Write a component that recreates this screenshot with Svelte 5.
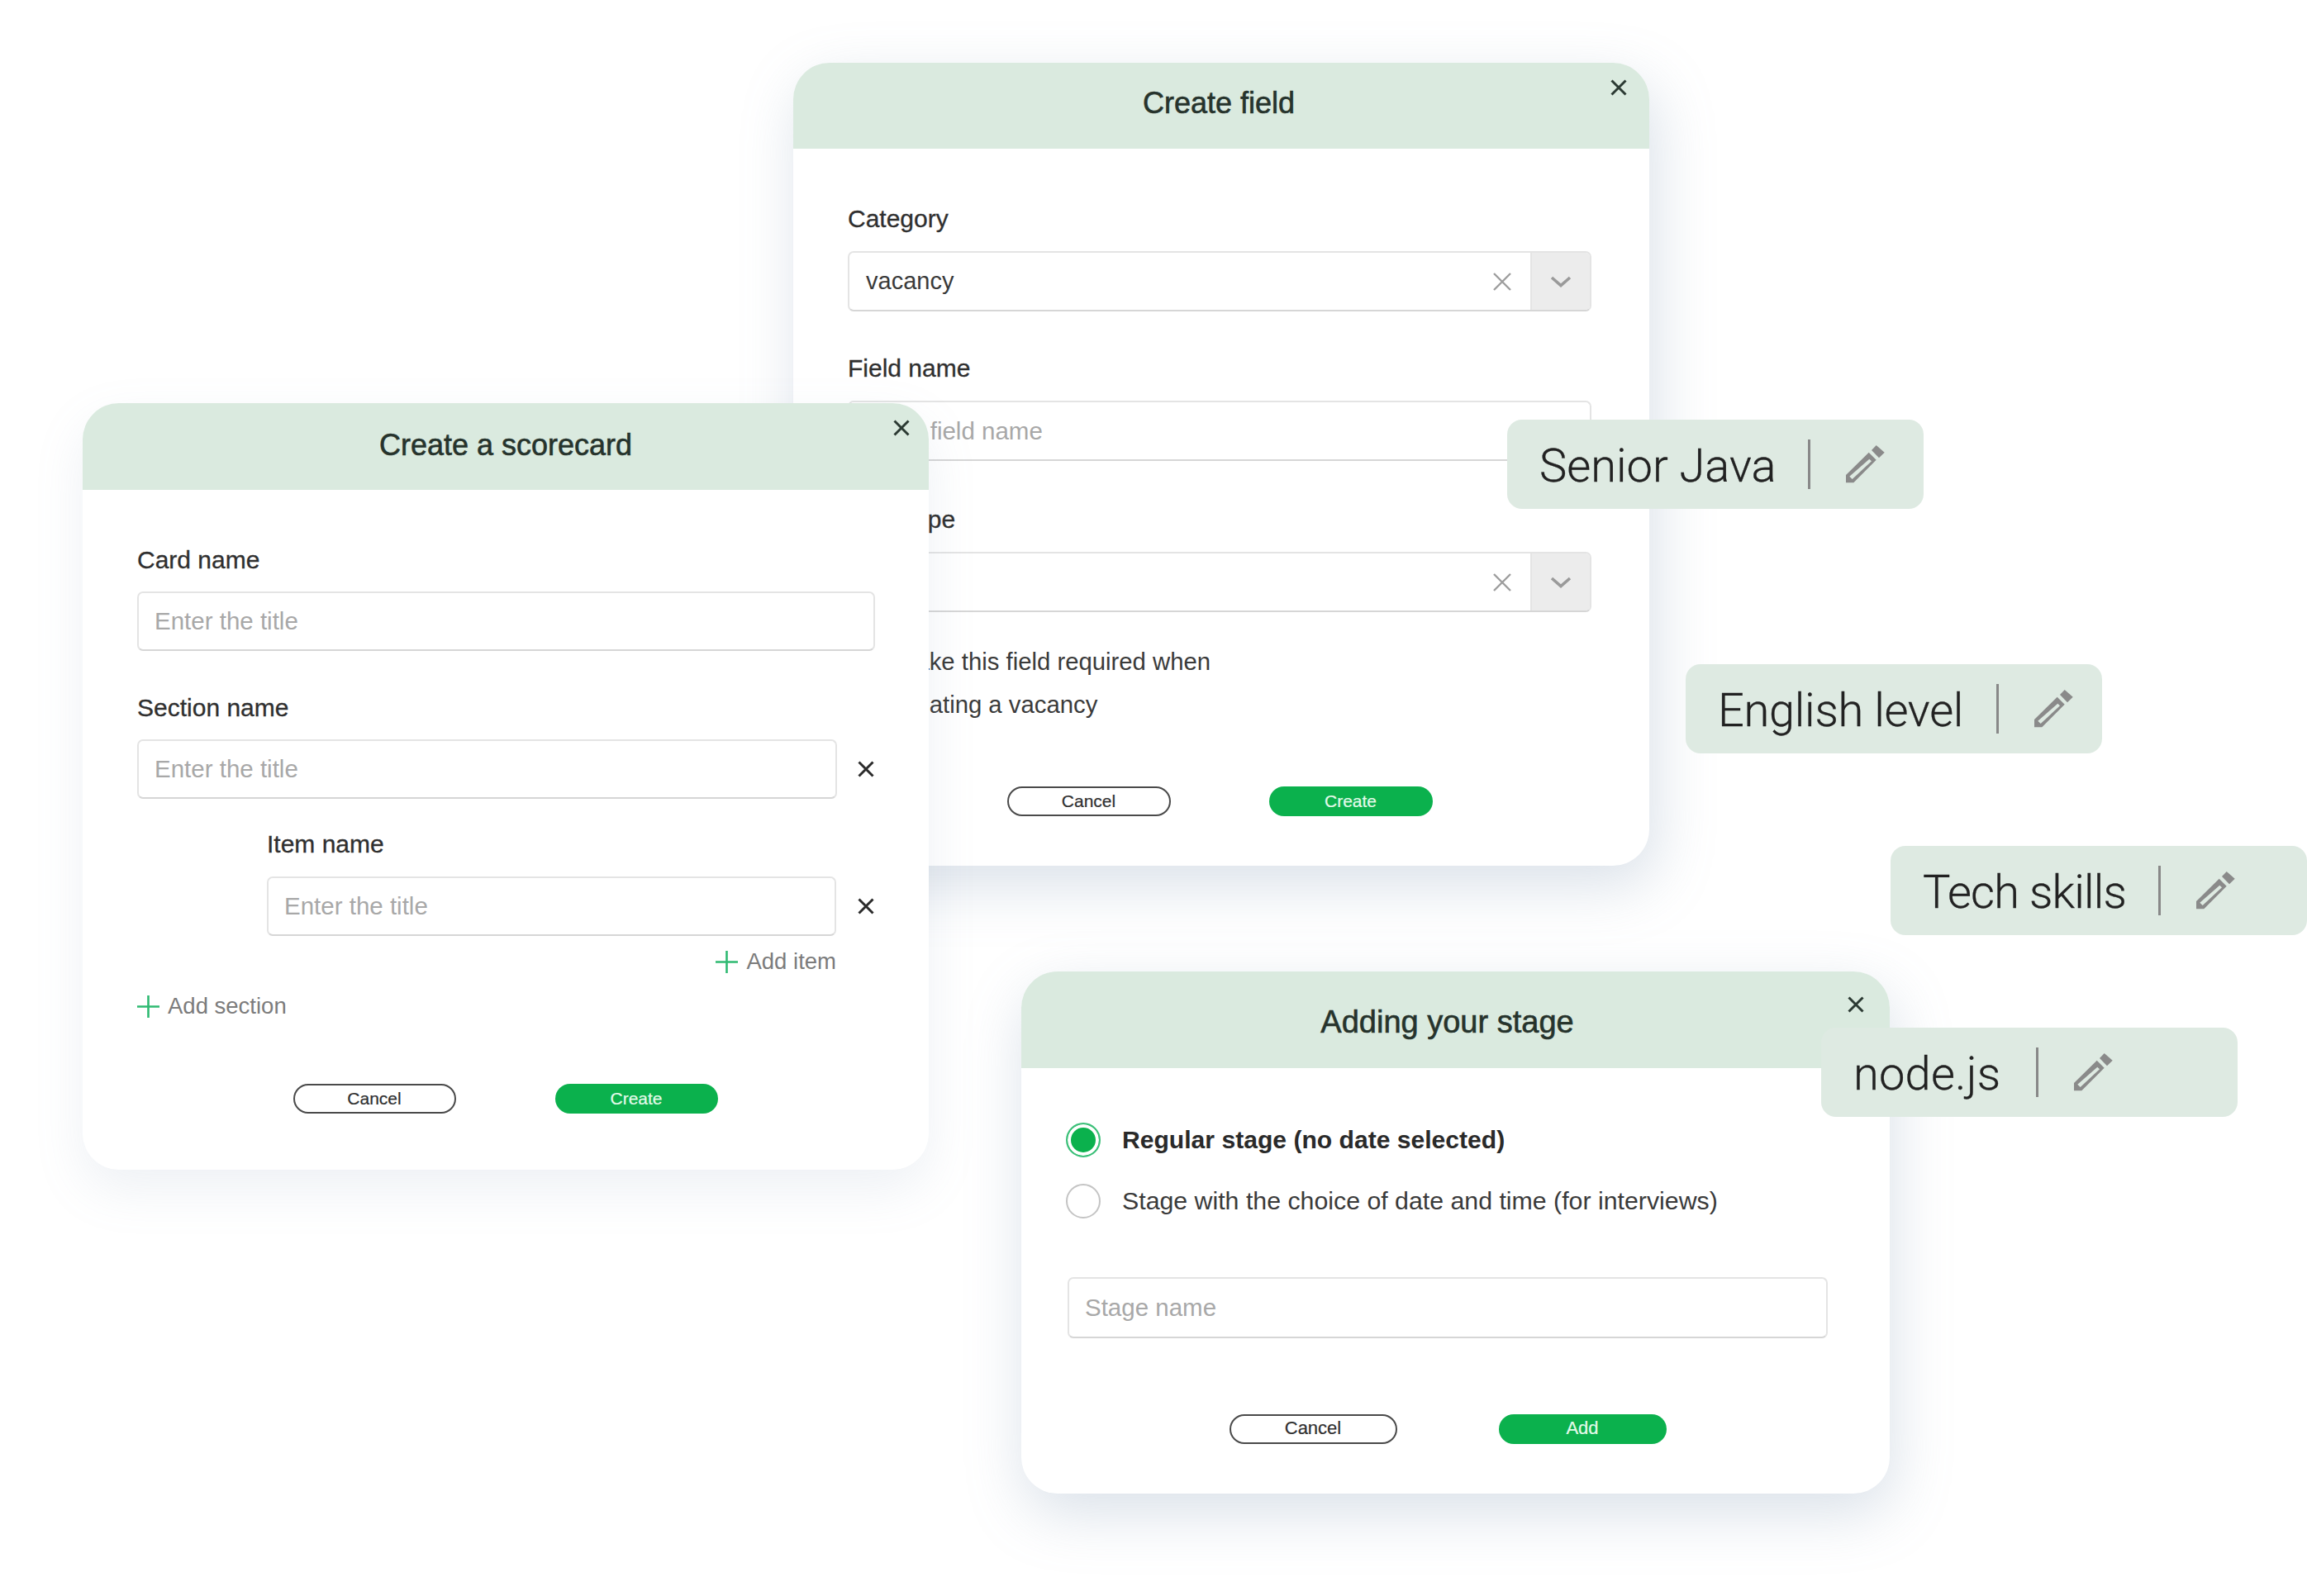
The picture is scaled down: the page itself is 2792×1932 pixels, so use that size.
<script lang="ts">
  // textWidth keeps the separators where they belong, spacing trims each label to its measured width
  const chips = [
    { text: "Senior Java", x: 1824, y: 508, textWidth: 283, spacing: 0 },
    { text: "English level", x: 2040, y: 804, textWidth: 295, spacing: -0.3 },
    { text: "Tech skills", x: 2288, y: 1024, textWidth: 243, spacing: -0.8 },
    { text: "node.js", x: 2204, y: 1244, textWidth: 179, spacing: 0.2 },
  ];
</script>

{#snippet cross(cls)}
  <svg class={cls} viewBox="0 0 20 20" fill="none" stroke="currentColor" stroke-width="3">
    <path d="M1.5 1.5 18.5 18.5M18.5 1.5 1.5 18.5" />
  </svg>
{/snippet}

{#snippet plus()}
  <svg class="plus" viewBox="0 0 27 27" fill="none" stroke="currentColor" stroke-width="2.6">
    <path d="M13.5 0V27M0 13.5H27" />
  </svg>
{/snippet}

{#snippet select(value)}
  <div class="select">
    <span class="select-value">{value}</span>
    <svg class="clear" viewBox="0 0 22 22" fill="none" stroke="currentColor" stroke-width="2.4">
      <path d="M1 1 21 21M21 1 1 21" />
    </svg>
    <span class="select-arrow">
      <svg width="26" height="14" viewBox="0 0 26 14" fill="none" stroke="currentColor" stroke-width="3.6">
        <path d="M2 2 13 11.5 24 2" />
      </svg>
    </span>
  </div>
{/snippet}

{#snippet pencil()}
  <svg class="pencil" viewBox="14 13 48 48" fill="#8a8a8a">
    <path d="M51.7 14 61.7 22.7 55 29.3 46 20Z" />
    <path fill-rule="evenodd" d="M42.7 22.7 51.7 31.7 24.3 59.3H15V50ZM43.3 30.7 19.3 51.7 22.7 55 46 33.3Z" />
  </svg>
{/snippet}

<div class="canvas">
  <section class="card card-field">
    <header class="card-head"><h2>Create field</h2></header>
    <button class="close">{@render cross("x-icon")}</button>
    <div class="card-body">
      <div class="label">Category</div>
      {@render select("vacancy")}
      <div class="label next">Field name</div>
      <input class="input" placeholder="Enter field name" />
      <div class="label next2">Field type</div>
      {@render select("")}
      <div class="required">
        <span class="check"></span>
        <span>Make this field required when<br />creating a vacancy</span>
      </div>
      <div class="actions">
        <button class="btn btn-cancel">Cancel</button>
        <button class="btn btn-primary">Create</button>
      </div>
    </div>
  </section>

  <section class="card card-score">
    <header class="card-head"><h2>Create a scorecard</h2></header>
    <button class="close">{@render cross("x-icon")}</button>
    <div class="card-body">
      <div class="label">Card name</div>
      <input class="input" placeholder="Enter the title" />
      <div class="label next">Section name</div>
      <div class="row">
        <input class="input" placeholder="Enter the title" />
        <span class="row-x">{@render cross("x-icon")}</span>
      </div>
      <div class="item">
        <div class="label">Item name</div>
        <div class="row">
          <input class="input" placeholder="Enter the title" />
          <span class="row-x">{@render cross("x-icon")}</span>
        </div>
        <div class="add add-item">{@render plus()}Add item</div>
      </div>
      <div class="add add-section">{@render plus()}Add section</div>
      <div class="actions">
        <button class="btn btn-cancel">Cancel</button>
        <button class="btn btn-primary">Create</button>
      </div>
    </div>
  </section>

  <section class="card card-stage">
    <header class="card-head"><h2>Adding your stage</h2></header>
    <button class="close">{@render cross("x-icon")}</button>
    <div class="card-body">
      <div class="radio selected"><span class="dot"></span>Regular stage (no date selected)</div>
      <div class="radio"><span class="dot"></span>Stage with the choice of date and time (for interviews)</div>
      <input class="input" placeholder="Stage name" />
      <div class="actions">
        <button class="btn btn-cancel">Cancel</button>
        <button class="btn btn-primary">Add</button>
      </div>
    </div>
  </section>

  {#each chips as chip}
    <div class="chip" style="left: {chip.x}px; top: {chip.y}px">
      <span class="chip-text" style="width: {chip.textWidth}px; letter-spacing: {chip.spacing}px">{chip.text}</span>
      <span class="chip-sep"></span>
      {@render pencil()}
    </div>
  {/each}
</div>

<style>
  :global(body) {
    margin: 0;
    background: #fff;
  }

  .canvas {
    position: relative;
    width: 2792px;
    height: 1932px;
    overflow: hidden;
    background: #fff;
    font-family: "Liberation Sans", Arial, sans-serif;
    color: #333;
  }

  /* windows */
  .card {
    position: absolute;
    display: flex;
    flex-direction: column;
    box-sizing: border-box;
    background: #fff;
    border-radius: 44px;
  }
  .card-field {
    left: 960px;
    top: 76px;
    width: 1036px;
    height: 972px;
    box-shadow: 8px 24px 70px rgba(120, 145, 175, 0.27);
  }
  .card-score {
    left: 100px;
    top: 488px;
    width: 1024px;
    height: 928px;
    box-shadow: 0 24px 60px rgba(120, 145, 175, 0.13);
  }
  .card-stage {
    left: 1236px;
    top: 1176px;
    width: 1051px;
    height: 632px;
    box-shadow: 4px 24px 70px rgba(120, 145, 175, 0.27);
  }

  .card-head {
    display: flex;
    align-items: center;
    justify-content: center;
    height: 104px;
    padding-bottom: 6px;
    box-sizing: border-box;
    flex-shrink: 0;
    background: #daeadf;
    border-radius: 44px 44px 0 0;
  }
  .card-field .card-head {
    padding-right: 6px;
  }
  .card-score .card-head {
    height: 105px;
    padding-bottom: 4px;
  }
  .card-stage .card-head {
    height: 117px;
    padding-bottom: 0;
    padding-right: 20px;
    padding-top: 4px;
  }
  h2 {
    margin: 0;
    font-size: 36px;
    font-weight: 400;
    line-height: 46px;
    color: #26332c;
    -webkit-text-stroke: 0.6px #26332c;
  }
  .card-stage h2 {
    font-size: 38px;
  }

  .close {
    position: absolute;
    padding: 0;
    border: 0;
    background: none;
    display: flex;
    color: #2b3a33;
  }
  .card-field .close {
    left: 989px;
    top: 20px;
  }
  .card-score .close {
    left: 981px;
    top: 20px;
  }
  .card-stage .close {
    left: 1000px;
    top: 30px;
  }
  .x-icon {
    width: 20px;
    height: 20px;
  }

  .card-body {
    display: flex;
    flex-direction: column;
    padding: 67px 70px 0 66px;
  }
  .card-score .card-body {
    padding-right: 65px;
  }
  .card-stage .card-body {
    padding: 66px 75px 0 56px;
  }

  /* form bits */
  .label {
    font-size: 30px;
    line-height: 36px;
    margin-bottom: 21px;
    color: #2f2f2f;
    -webkit-text-stroke: 0.3px #2f2f2f;
  }
  .card-score .label {
    margin-bottom: 20px;
  }
  .card-score .item .label {
    margin-bottom: 21px;
  }
  .next {
    margin-top: 51px;
  }
  .next2 {
    margin-top: 53px;
  }

  .input {
    display: block;
    box-sizing: border-box;
    width: 100%;
    height: 72px;
    padding: 0 19px;
    font: inherit;
    font-size: 29.5px;
    color: #333;
    background: #fff;
    border: 2px solid #e4e4e4;
    border-bottom-color: #d6d6d6;
    border-radius: 7px;
    outline: none;
  }
  .input::placeholder {
    color: #a8a8a8;
    opacity: 1;
  }
  .card-field .input {
    height: 73px;
  }

  .select {
    display: flex;
    align-items: center;
    box-sizing: border-box;
    height: 73px;
    border: 2px solid #e4e4e4;
    border-bottom-color: #d6d6d6;
    border-radius: 7px;
    overflow: hidden;
  }
  .select-value {
    flex: 1;
    padding-left: 20px;
    font-size: 29px;
    color: #3a3a3a;
  }
  .clear {
    width: 22px;
    height: 22px;
    margin-right: 23px;
    color: #9d9d9d;
  }
  .select-arrow {
    display: flex;
    align-items: center;
    justify-content: center;
    width: 70px;
    height: 100%;
    background: #ececec;
    color: #9a9a9a;
    border-left: 2px solid #e4e4e4;
  }

  .required {
    display: flex;
    gap: 30px;
    margin-top: 34px;
    font-size: 29.3px;
    line-height: 52px;
    color: #3a3a3a;
  }
  .check {
    width: 26px;
    height: 26px;
    margin-top: 12px;
    border: 1px solid #ccc;
  }

  .row {
    display: flex;
    align-items: center;
    gap: 25px;
    margin-right: 1px;
  }
  .row .input {
    flex: 1;
    min-width: 0;
  }
  .row-x {
    display: flex;
    color: #2b2b2b;
  }

  .item {
    margin: 37px 45px 0 157px;
  }
  .item .row {
    margin-right: -45px;
    gap: 26px;
  }
  .item .row .input {
    flex: 0 0 689px;
  }

  .add {
    display: flex;
    align-items: center;
    gap: 10px;
    font-size: 27.5px;
    line-height: 36px;
    color: #7c7c7c;
  }
  .add-item {
    justify-content: flex-end;
    margin-top: 13px;
    margin-right: 2px;
  }
  .add-section {
    margin-top: 18px;
  }
  .plus {
    width: 27px;
    height: 27px;
    color: #2fba72;
  }

  .actions {
    display: flex;
    justify-content: center;
    gap: 119px;
    margin-top: 73px;
  }
  .card-score .actions {
    gap: 120px;
    margin-top: 76px;
    margin-left: -2px;
  }
  .btn {
    box-sizing: border-box;
    width: 198px;
    height: 36px;
    padding: 0 0 2px;
    font: inherit;
    font-size: 21px;
    line-height: 1;
    border-radius: 18px;
  }
  .card-score .btn {
    width: 197px;
  }
  .btn-cancel {
    background: #fff;
    color: #2f2f2f;
    border: 2px solid #4a4a4a;
    -webkit-text-stroke: 0.2px #2f2f2f;
  }
  .btn-primary {
    background: #0bb14d;
    color: #e4fbea;
    border: 0;
    -webkit-text-stroke: 0.2px #e4fbea;
  }

  .radio {
    display: flex;
    align-items: center;
    gap: 26px;
    height: 42px;
    margin-left: -2px;
    font-size: 30.3px;
    color: #3a3a3a;
    margin-top: 32px;
  }
  .radio:first-child {
    margin-top: 0;
  }
  .radio.selected {
    font-size: 30.1px;
    font-weight: 700;
    color: #2a2a2a;
  }
  .dot {
    box-sizing: border-box;
    flex-shrink: 0;
    width: 42px;
    height: 42px;
    border-radius: 50%;
    border: 2px solid #c4c4c4;
    background: #fff;
  }
  .selected .dot {
    border-color: #3dc07a;
    background: #0bb14d;
    box-shadow: inset 0 0 0 4px #fff;
  }
  .card-stage .input {
    height: 74px;
    margin-top: 71px;
  }
  .card-stage .actions {
    margin-top: 92px;
    gap: 123px;
  }
  .card-stage .btn {
    width: 203px;
    height: 36px;
    font-size: 22px;
  }

  /* chips */
  .chip {
    position: absolute;
    display: flex;
    align-items: center;
    box-sizing: border-box;
    width: 504px;
    height: 108px;
    padding-left: 39px;
    background: #deeae2;
    border-radius: 18px;
  }
  .chip-text {
    flex-shrink: 0;
    margin-top: 3px;
    font-family: Roboto, "Liberation Sans", sans-serif;
    font-weight: 300;
    font-size: 56px;
    color: #222;
    white-space: nowrap;
    -webkit-text-stroke: 0.3px #222;
  }
  .chip-sep {
    flex-shrink: 0;
    width: 3px;
    height: 60px;
    margin: 0 42px;
    background: #888;
  }
  .pencil {
    flex-shrink: 0;
    width: 48px;
    height: 48px;
    margin-top: -1px;
  }
</style>
